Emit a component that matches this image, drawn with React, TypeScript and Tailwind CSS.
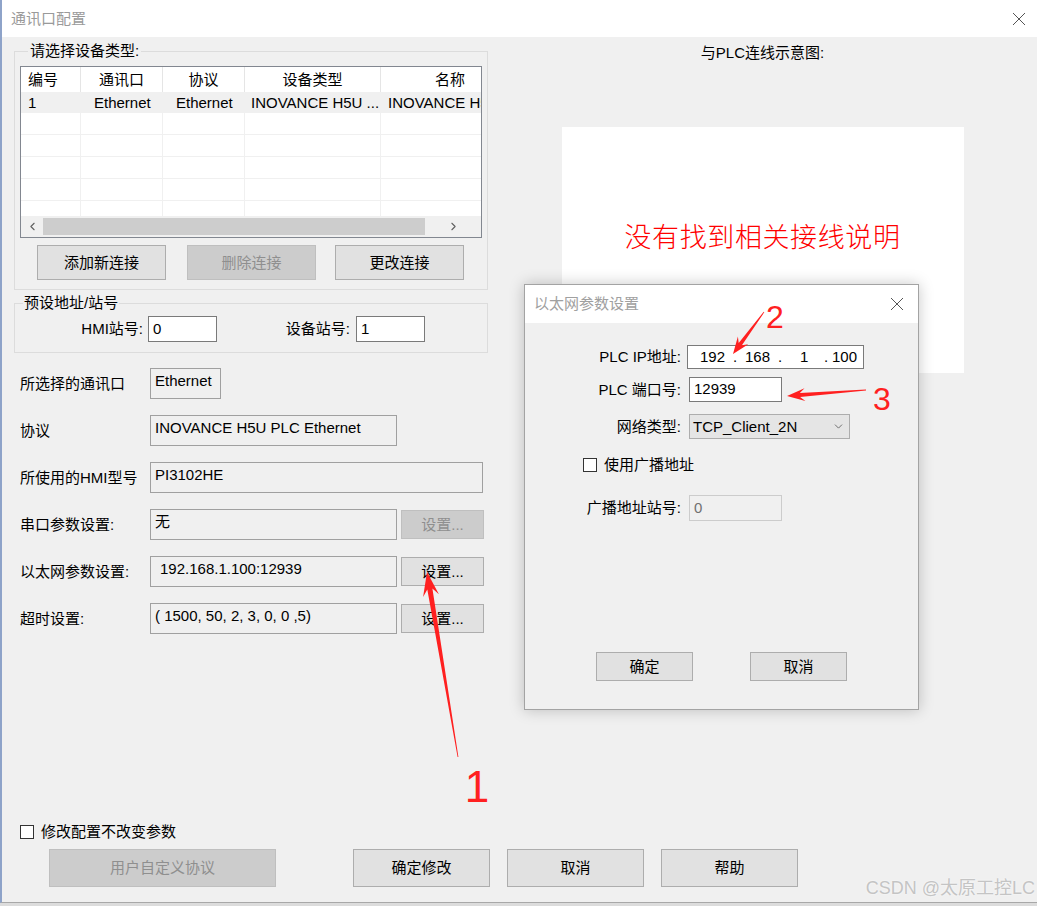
import type { ReactNode } from 'react';
import clsx from 'clsx';
import { ChevronDown, ChevronLeft, ChevronRight } from 'lucide-react';

function CloseX() {
  return (
    <svg width="14" height="14" viewBox="0 0 14 14" className="shrink-0">
      <path d="M1 1L13 13M13 1L1 13" stroke="#555" strokeWidth="1" fill="none" />
    </svg>
  );
}

function Btn({ children, disabled, className }: { children: ReactNode; disabled?: boolean; className?: string }) {
  return (
    <button
      className={clsx(
        'flex shrink-0 items-center justify-center border leading-[18px]',
        disabled ? 'border-[#bfbfbf] bg-[#cccccc] text-[#8f8f8f]' : 'border-[#adadad] bg-[#e1e1e1] text-black',
        className,
      )}
    >
      {children}
    </button>
  );
}

function CheckBox() {
  return <div className="h-[14px] w-[14px] shrink-0 border border-[#333] bg-white" />;
}

// tapered annotation arrow, tail -> tip
function arrow(x1: number, y1: number, x2: number, y2: number, head: number, half: number, shaft: number) {
  const len = Math.hypot(x2 - x1, y2 - y1);
  const ux = (x2 - x1) / len;
  const uy = (y2 - y1) / len;
  const nx = -uy;
  const ny = ux;
  const bx = x2 - ux * head;
  const by = y2 - uy * head;
  const kx = x2 - ux * head * 0.72;
  const ky = y2 - uy * head * 0.72;
  const pts = [
    [x1 + nx * 0.4, y1 + ny * 0.4],
    [kx + nx * shaft, ky + ny * shaft],
    [bx + nx * half, by + ny * half],
    [x2, y2],
    [bx - nx * half, by - ny * half],
    [kx - nx * shaft, ky - ny * shaft],
    [x1 - nx * 0.4, y1 - ny * 0.4],
  ];
  return pts.map((p) => p.map((v) => v.toFixed(1)).join(',')).join(' ');
}

const cols = 'grid grid-cols-[60px_82px_82px_136px_138px]';

const fields = [
  { label: '所选择的通讯口', value: 'Ethernet', w: 'w-[71px]' },
  { label: '协议', value: 'INOVANCE H5U PLC Ethernet', w: 'w-[247px]' },
  { label: '所使用的HMI型号', value: 'PI3102HE', w: 'w-[333px]' },
  { label: '串口参数设置:', value: '无', w: 'w-[247px]', btn: 'off' },
  { label: '以太网参数设置:', value: '192.168.1.100:12939', w: 'w-[247px]', btn: 'on', pad: 'pl-[9px]' },
  { label: '超时设置:', value: '( 1500, 50, 2, 3, 0, 0 ,5)', w: 'w-[247px]', btn: 'on' },
];

export default function App() {
  return (
    <div className="relative h-[906px] w-[1037px] overflow-hidden bg-[#dcdcdc] font-['Liberation_Sans','Noto_Sans_CJK_SC',sans-serif] text-[15px] leading-[18px] text-black">
      {/* main window */}
      <div className="flex h-[903px] w-[1037px] flex-col border-b border-l-2 border-b-[#a8a8a8] border-l-[#8ea3c9]">
        <div className="flex h-[37px] shrink-0 items-center justify-between bg-white pl-[9px] pr-[11px]">
          <span className="text-[15px] text-[#9a9a9a]">通讯口配置</span>
          <CloseX />
        </div>

        <div className="flex flex-1 flex-col bg-[#f0f0f0]">
          <div className="flex">
            {/* left column */}
            <div className="w-[486px] shrink-0 pl-[12px]">
              <fieldset className="mt-[6px] border border-[#dcdcdc] px-[5px] pb-[9px] pt-[7px]">
                <legend className="ml-[8px] px-[2px] leading-[16px]">请选择设备类型:</legend>
                <div className="flex h-[172px] w-[462px] flex-col overflow-hidden border border-[#828790] bg-white">
                  <div className={clsx(cols, 'h-[25px] shrink-0 items-center')}>
                    <div className="flex h-full items-center border-r border-[#e5e5e5] pl-[7px]">编号</div>
                    <div className="flex h-full items-center justify-center border-r border-[#e5e5e5]">通讯口</div>
                    <div className="flex h-full items-center justify-center border-r border-[#e5e5e5]">协议</div>
                    <div className="flex h-full items-center justify-center border-r border-[#e5e5e5]">设备类型</div>
                    <div className="flex h-full items-center justify-center">名称</div>
                  </div>
                  <div className="flex-1 overflow-hidden">
                    <div className={clsx(cols, 'h-[21px] items-center whitespace-nowrap bg-[#f0f0f0]')}>
                      <div className="pl-[7px]">1</div>
                      <div className="pl-[13px]">Ethernet</div>
                      <div className="pl-[13px]">Ethernet</div>
                      <div className="overflow-hidden pl-[6px]">INOVANCE H5U ...</div>
                      <div className="overflow-hidden pl-[7px]">INOVANCE H5U PLC Ethernet</div>
                    </div>
                    {[0, 1, 2, 3, 4].map((i) => (
                      <div key={i} className={clsx(cols, 'h-[22px] border-b border-[#f0f0f0]')}>
                        <div className="border-r border-[#f0f0f0]" />
                        <div className="border-r border-[#f0f0f0]" />
                        <div className="border-r border-[#f0f0f0]" />
                        <div className="border-r border-[#f0f0f0]" />
                        <div />
                      </div>
                    ))}
                  </div>
                  <div className="flex h-[21px] shrink-0 items-center bg-[#f0f0f0]">
                    <div className="flex w-[22px] justify-center">
                      <ChevronLeft size={13} strokeWidth={2} color="#606060" />
                    </div>
                    <div className="h-[17px] w-[382px] bg-[#cdcdcd]" />
                    <div className="flex flex-1 justify-center">
                      <ChevronRight size={13} strokeWidth={2} color="#606060" />
                    </div>
                  </div>
                </div>
                <div className="mt-[7px] flex">
                  <Btn className="ml-[17px] h-[35px] w-[129px]">添加新连接</Btn>
                  <Btn disabled className="ml-[21px] h-[35px] w-[129px]">删除连接</Btn>
                  <Btn className="ml-[19px] h-[35px] w-[129px]">更改连接</Btn>
                </div>
              </fieldset>

              <fieldset className="mt-[5px] border border-[#dcdcdc] pb-[10px] pt-[5px]">
                <legend className="ml-[8px] px-[1px] leading-[16px]">预设地址/站号</legend>
                <div className="flex items-center">
                  <span className="w-[128px] text-right">HMI站号:</span>
                  <div className="ml-[5px] h-[26px] w-[69px] border border-[#7a7a7a] bg-white pl-[4px] pt-[3px]">0</div>
                  <span className="w-[133px] text-right">设备站号:</span>
                  <div className="ml-[6px] h-[26px] w-[69px] border border-[#7a7a7a] bg-white pl-[4px] pt-[3px]">1</div>
                </div>
              </fieldset>

              <div className="mt-[15px] flex flex-col gap-[16px] pl-[6px]">
                {fields.map((f) => (
                  <div key={f.label} className="flex h-[31px] items-center">
                    <span className="w-[130px] shrink-0 whitespace-nowrap">{f.label}</span>
                    <div
                      className={clsx(
                        'h-[31px] shrink-0 self-start whitespace-nowrap border border-[#a0a0a0] pt-[3px]',
                        f.pad ?? 'pl-[4px]',
                        f.w,
                      )}
                    >
                      {f.value}
                    </div>
                    {f.btn && (
                      <Btn disabled={f.btn === 'off'} className="ml-[4px] h-[29px] w-[83px]">
                        设置...
                      </Btn>
                    )}
                  </div>
                ))}
              </div>
            </div>

            {/* right column */}
            <div className="flex flex-1 flex-col items-center">
              <div className="mt-[8px] leading-[16px]">与PLC连线示意图:</div>
              <div className="mt-[66px] h-[246px] w-[402px] bg-white pt-[94px] text-center font-['Noto_Sans_CJK_SC',sans-serif] text-[27px] font-light leading-[30px] tracking-[0.6px] text-[#ff0000]">
                没有找到相关接线说明
              </div>
            </div>
          </div>

          <div className="flex-1" />

          <div className="flex h-[18px] items-center gap-[7px] pl-[18px]">
            <CheckBox />
            <span>修改配置不改变参数</span>
          </div>
          <div className="mb-[15px] mt-[8px] flex pl-[47px]">
            <Btn disabled className="h-[38px] w-[227px]">用户自定义协议</Btn>
            <Btn className="ml-[77px] h-[38px] w-[137px]">确定修改</Btn>
            <Btn className="ml-[17px] h-[38px] w-[137px]">取消</Btn>
            <Btn className="ml-[17px] h-[38px] w-[137px]">帮助</Btn>
          </div>
        </div>
      </div>

      {/* ethernet settings dialog */}
      <div className="absolute left-[524px] top-[284px] flex h-[426px] w-[395px] flex-col border border-[#a3a3a3] shadow-[0_0_14px_rgba(0,0,0,0.22)]">
        <div className="flex h-[38px] shrink-0 items-center justify-between bg-white pl-[9px] pr-[14px]">
          <span className="text-[#a0a0a0]">以太网参数设置</span>
          <CloseX />
        </div>
        <div className="flex flex-1 flex-col bg-[#f0f0f0] pt-[22px]">
          <div className="flex h-[24px] items-center">
            <span className="w-[156px] text-right">PLC IP地址:</span>
            <div className="ml-[6px] flex h-[24px] w-[177px] items-center border border-[#7a7a7a] bg-white pl-[12px]">
              <span className="w-[33px]">192</span>
              <span className="w-[12px]">.</span>
              <span className="w-[33px]">168</span>
              <span className="w-[22px]">.</span>
              <span className="w-[24px]">1</span>
              <span className="w-[8px]">.</span>
              <span>100</span>
            </div>
          </div>
          <div className="mt-[8px] flex h-[25px] items-center">
            <span className="w-[156px] text-right">PLC 端口号:</span>
            <div className="ml-[8px] h-[25px] w-[93px] border border-[#7a7a7a] bg-white pl-[4px] pt-[2px]">12939</div>
          </div>
          <div className="mt-[12px] flex h-[25px] items-center">
            <span className="w-[156px] text-right">网络类型:</span>
            <div className="ml-[8px] flex h-[25px] w-[161px] items-center justify-between border border-[#adadad] bg-[#e5e5e5] pl-[3px] pr-[4px]">
              <span>TCP_Client_2N</span>
              <ChevronDown size={13} strokeWidth={1.5} color="#555" />
            </div>
          </div>
          <div className="mt-[17px] flex h-[18px] items-center gap-[7px] pl-[58px]">
            <CheckBox />
            <span>使用广播地址</span>
          </div>
          <div className="mt-[21px] flex h-[26px] items-center">
            <span className="w-[156px] text-right">广播地址站号:</span>
            <div className="ml-[8px] h-[26px] w-[93px] border border-[#cccccc] bg-[#f0f0f0] pl-[4px] pt-[3px] text-[#707070]">0</div>
          </div>
          <div className="mt-[131px] flex pl-[71px]">
            <Btn className="h-[29px] w-[97px]">确定</Btn>
            <Btn className="ml-[57px] h-[29px] w-[97px]">取消</Btn>
          </div>
        </div>
      </div>

      {/* red annotations */}
      <svg className="pointer-events-none absolute left-0 top-0" width="1037" height="906">
        <polygon points={arrow(458, 757, 427, 572, 24, 8, 2.6)} fill="#ff2020" />
        <polygon points={arrow(764, 312, 733, 354, 17, 6.5, 2)} fill="#ff2020" />
        <polygon points={arrow(866, 390, 787, 396, 18, 6.5, 2)} fill="#ff2020" />
        <text x="477" y="802" fontSize="44" textAnchor="middle" fill="#ff2020" fontFamily="Liberation Sans, sans-serif">1</text>
        <text x="775" y="328" fontSize="32" textAnchor="middle" fill="#ff2020" fontFamily="Liberation Sans, sans-serif">2</text>
        <text x="882" y="410" fontSize="32" textAnchor="middle" fill="#ff2020" fontFamily="Liberation Sans, sans-serif">3</text>
      </svg>

      <div className="pointer-events-none absolute bottom-[7px] right-[2px] font-['Liberation_Sans','Noto_Sans_CJK_SC',sans-serif] text-[18px] leading-[22px] text-[#c4c4c4] [text-shadow:0_0_2px_#fff]">
        CSDN @太原工控LC
      </div>
    </div>
  );
}
